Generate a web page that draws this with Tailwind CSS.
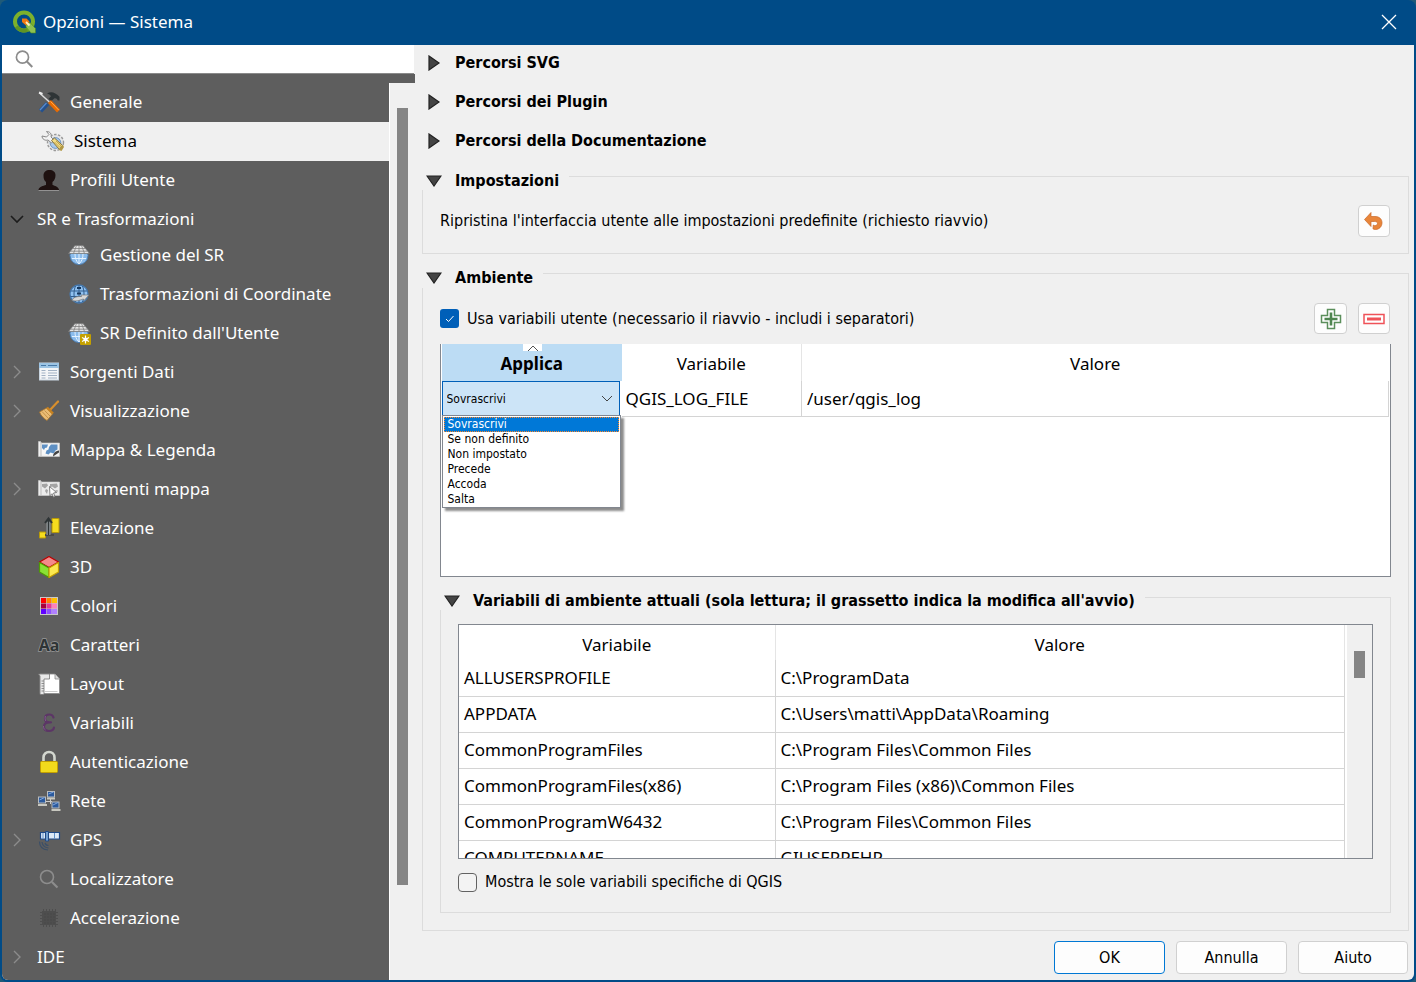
<!doctype html>
<html lang="it">
  <head>
    <meta charset="UTF-8" />
    <meta name="viewport" content="width=device-width, initial-scale=1.0" />
    <title>Opzioni — Sistema</title>
    <script src="https://cdn.jsdelivr.net/npm/@tailwindcss/browser@4"></script>
  </head>
  <body class="bg-[#1f5a78]">
    <div
      class="flex h-screen min-h-[960px] flex-col overflow-hidden rounded-lg bg-[#004b87] px-[2px] pb-[2px] font-['DejaVu_Sans_Condensed','Noto_Sans',sans-serif] text-base text-black"
    >
      <!-- Title bar -->
      <header class="flex h-[45px] shrink-0 items-center pr-[17px] pb-px pl-[10px] text-white">
        <svg class="h-6 w-6" viewBox="0 0 24 24" fill="none">
          <circle cx="12" cy="11.500" r="9" stroke="#7cb02c" stroke-width="4" />
          <path d="M4.500 16.500a9 9 0 0 0 11 3.500" stroke="#5f9424" stroke-width="3.600" />
          <path d="M14 13l4-.500 5.500 6v4.500h-4.500l-5-6z" fill="#8cc152" stroke="#4c8a1e" stroke-width=".6" />
          <path d="M10 8.500h4.500l3 3-3.500 4-4-3.500z" fill="#ee7913" />
          <path d="M14 12l3.500 3.500" stroke="#fcecc0" stroke-width="1.800" />
        </svg>
        <h1 class="ml-[7px] flex-1 font-['Noto_Sans',sans-serif] text-[17px]">Opzioni — Sistema</h1>
        <button type="button" aria-label="Chiudi">
          <svg class="h-4 w-4" viewBox="0 0 16 16" stroke="#fff" stroke-width="1.300"><path d="M1 1l14 14M15 1L1 15" /></svg>
        </button>
      </header>

      <div class="flex min-h-0 flex-1 overflow-hidden rounded-b-md bg-[#f0f0f0]">
        <!-- Sidebar -->
        <aside class="flex w-[413px] shrink-0 flex-col">
          <label class="mr-px flex h-[29px] shrink-0 items-center border-b border-[#8a8a8a] bg-white pl-[13px]">
            <svg class="h-5 w-5" viewBox="0 0 20 20" fill="none" stroke="#8c8c8c" stroke-width="1.800">
              <circle cx="8" cy="8" r="6.500" />
              <path d="M12.500 12.500l6 6" stroke-width="2.200" />
            </svg>
            <input type="search" aria-label="Cerca" class="ml-2 w-full outline-none" />
          </label>
          <div class="h-[9px] shrink-0 bg-[#5e5e5e]"></div>
          <div class="flex min-h-0 flex-1">
            <nav class="flex-1 bg-[#5e5e5e] font-['Noto_Sans',sans-serif] text-[17px] text-white">
              <ul>
                <li>
                  <a href="#" class="flex h-[39px] items-center pb-0.5 pl-[35px]">
                    <svg class="mr-[9px] h-6 w-6" viewBox="0 0 24 24" fill="none">
                      <path d="M10 3.500c4-2.500 8-1.500 12.500 3.200v3.800h-1.700c-.7-1.700-1.800-2.500-3.300-2.200l-3.500 3-2.500-2.500 2.500-2.500c-1-1.500-2-2.300-4-2.800z" fill="#2e3436" />
                      <path d="M2.500 3l11 10" stroke="#dcdcdc" stroke-width="1.500" />
                      <path d="M2 2.500l3.500 1.500" stroke="#eee" stroke-width="2" />
                      <path d="M10.500 13.500l-7 7.500" stroke="#23518f" stroke-width="4.400" />
                      <path d="M9.500 13l-6.500 7" stroke="#5b8bc9" stroke-width="1.300" />
                      <path d="M12.500 11.500l9 9.500" stroke="#e86a00" stroke-width="4" />
                      <path d="M13.500 11.500l8.300 8.700" stroke="#ffac50" stroke-width="1" />
                    </svg>
                    Generale
                  </a>
                </li>
                <li>
                  <a href="#" aria-current="page" class="flex h-[39px] items-center bg-[#f0f0f0] pb-0.5 pl-[39px] text-black">
                    <svg class="mr-[9px] h-6 w-6" viewBox="0 0 24 24" fill="none">
                      <circle cx="14.500" cy="13.500" r="8" fill="#e6e6e6" stroke="#999" stroke-width="1.400" stroke-dasharray="2.500 1.500" />
                      <circle cx="14.500" cy="14" r="5.400" fill="#a9c9ec" stroke="#5d88b8" stroke-width=".8" />
                      <path d="M1 7c0 3 3 5 6 4l3.500 3 2.500-3-3-3c1-3-1-5.500-4.500-5.500L8 5.500 5.500 8z" fill="#f3f3f3" stroke="#888" stroke-width="1" />
                      <path d="M10.500 11.500l3-2.500 8 7.500-3 4z" fill="#f2dc85" stroke="#84713a" stroke-width="1" />
                      <path d="M13.500 13l5 5M15 12l5 5" stroke="#b99b3d" stroke-width=".8" />
                      <path d="M19 18l3-2 1 2-2.500 4-2.500-1z" fill="#b19845" />
                    </svg>
                    Sistema
                  </a>
                </li>
                <li>
                  <a href="#" class="flex h-[39px] items-center pb-0.5 pl-[35px]">
                    <svg class="mr-[9px] h-6 w-6" viewBox="0 0 24 24">
                      <path d="M1.500 22.500h20.500v-1c-1-3-4-3.500-6.500-4.500v-3c2-1.500 3-4 3-7C18.500 4 16 2 12.500 2S6.500 4 6.500 7.500c0 3 .5 5 2.500 6.500v3c-3 1-6.500 1.500-7.500 4.500z" fill="#1e1110" />
                      <path d="M1.500 22.500h20.500" stroke="#aaa" stroke-width=".8" />
                    </svg>
                    Profili Utente
                  </a>
                </li>
                <li>
                  <a href="#" class="flex h-9 items-center pt-px pl-2">
                    <svg class="mr-[13px] h-[14px] w-[14px]" viewBox="0 0 14 14" fill="none" stroke="#1c1c1c" stroke-width="1.600"><path d="M1 4l6 6 6-6" /></svg>
                    SR e Trasformazioni
                  </a>
                  <ul>
                    <li>
                      <a href="#" class="flex h-[39px] items-center pb-0.5 pl-[65px]">
                        <svg class="mr-[9px] h-6 w-6" viewBox="0 0 24 24" fill="none">
                          <circle cx="12" cy="12.500" r="9" fill="#8bbcec" stroke="#4f81b5" stroke-width="1" />
                          <path d="M12 11v10M5 15.500h14M8 11c0 4 1 7 4 10M16 11c0 4-1 7-4 10" stroke="#e4f2ff" stroke-width="1" />
                          <path d="M8 2.500h8l6.500 8H1.500z" fill="#e3e3e3" stroke="#777" stroke-width=".8" />
                          <path d="M5.500 5.500h13M3.500 8.200h17M12 2.500v8M9.500 2.500l-3 8M14.500 2.500l3 8" stroke="#808080" stroke-width=".8" />
                        </svg>
                        Gestione del SR
                      </a>
                    </li>
                    <li>
                      <a href="#" class="flex h-[39px] items-center pb-0.5 pl-[65px]">
                        <svg class="mr-[9px] h-6 w-6" viewBox="0 0 24 24" fill="none">
                          <circle cx="12" cy="12" r="9" fill="#8fc0ef" stroke="#4779ae" stroke-width="1.300" />
                          <path d="M12 3v18M3.500 9h17M3.500 14.500h17M8.500 4c-2 5-2 11 0 16M15.500 4c2 5 2 11 0 16" stroke="#315d8d" stroke-width="1" />
                          <path d="M10 6h4M10 11.500h4" stroke="#16385f" stroke-width="2" />
                          <path d="M5 18.500c1-3 4-4 8-4h1.500l-.5-1.500 8 0-5 5.500-.5-1.500c-3 .5-6 3-11.500 1.500z" fill="#d6d6d6" stroke="#777" stroke-width=".7" />
                        </svg>
                        Trasformazioni di Coordinate
                      </a>
                    </li>
                    <li>
                      <a href="#" class="flex h-[39px] items-center pb-0.5 pl-[65px]">
                        <svg class="mr-[9px] h-6 w-6" viewBox="0 0 24 24" fill="none">
                          <circle cx="12" cy="12.500" r="9" fill="#8bbcec" stroke="#4f81b5" stroke-width="1" />
                          <path d="M12 11v10M5 15.500h14M8 11c0 4 1 7 4 10M16 11c0 4-1 7-4 10" stroke="#e4f2ff" stroke-width="1" />
                          <path d="M8 2.500h8l6.500 8H1.500z" fill="#e3e3e3" stroke="#777" stroke-width=".8" />
                          <path d="M5.500 5.500h13M3.500 8.200h17M12 2.500v8M9.500 2.500l-3 8M14.500 2.500l3 8" stroke="#808080" stroke-width=".8" />
                          <rect x="13" y="13" width="11" height="11" rx="1" fill="#c4a000" />
                          <path d="M18.500 14.500v8M15 16.500l7 4M22 16.500l-7 4" stroke="#fff" stroke-width="1.200" />
                          <circle cx="18.500" cy="18.500" r="2" fill="#fff" />
                        </svg>
                        SR Definito dall'Utente
                      </a>
                    </li>
                  </ul>
                </li>
                <li>
                  <a href="#" class="flex h-[39px] items-center pb-0.5 pl-2">
                    <svg class="mr-[13px] h-[14px] w-[14px]" viewBox="0 0 14 14" fill="none" stroke="#8c8c8c" stroke-width="1.400"><path d="M4 1l6 6-6 6" /></svg>
                    <svg class="mr-[9px] h-6 w-6" viewBox="0 0 24 24">
                      <rect x="2.500" y="3" width="19" height="17" fill="#f3f5f7" stroke="#c8d4df" />
                      <path d="M2 3h20v5H2z" fill="#9cc4e4" />
                      <path d="M4 5.500h5M11 5.500h9" stroke="#4679a8" stroke-width="1.200" />
                      <path d="M4.500 10.500h4M4.500 13h4M4.500 15.500h4M4.500 18h4M11 10.500h9M11 13h9M11 15.500h9M11 18h9" stroke="#a2b2c4" stroke-width="1.100" />
                    </svg>
                    Sorgenti Dati
                  </a>
                </li>
                <li>
                  <a href="#" class="flex h-[39px] items-center pb-0.5 pl-2">
                    <svg class="mr-[13px] h-[14px] w-[14px]" viewBox="0 0 14 14" fill="none" stroke="#8c8c8c" stroke-width="1.400"><path d="M4 1l6 6-6 6" /></svg>
                    <svg class="mr-[9px] h-6 w-6" viewBox="0 0 24 24">
                      <path d="M13 11l8-8.500" stroke="#d98f2c" stroke-width="2.200" stroke-linecap="round" />
                      <path d="M2.500 13L9.500 9l6 6-5.500 6.500c-3-2-6-4.500-7.500-8.500z" fill="#e9bb74" stroke="#a8742c" stroke-width=".8" />
                      <path d="M10 8.500l6 6" stroke="#c7811f" stroke-width="2.400" />
                      <path d="M5 12.500l6 6.500M7.500 11.500l5.500 5.500" stroke="#b98840" stroke-width=".8" />
                    </svg>
                    Visualizzazione
                  </a>
                </li>
                <li>
                  <a href="#" class="flex h-[39px] items-center pb-0.5 pl-[35px]">
                    <svg class="mr-[9px] h-6 w-6" viewBox="0 0 24 24">
                      <path d="M1.500 3.500h2l1 1.500h18v13.500H1.500z" fill="#f1f1f1" stroke="#cfcfcf" stroke-width=".6" />
                      <path d="M4.500 6.500h16.500v10H4.500z" fill="#f8f8f8" />
                      <path d="M5 6.500h6l-1 3-2 .500-1 2-2-2zM12 9l2-2.500h6.500v5l-2 1-2 3-3-1-2 2-3-1 1-3 2-1z" fill="#5e90c4" />
                      <path d="M16 18.500c0-3 2-5.500 6-6v2z" fill="#444" />
                      <path d="M4 4v14" stroke="#aaa" stroke-width=".7" />
                    </svg>
                    Mappa &amp; Legenda
                  </a>
                </li>
                <li>
                  <a href="#" class="flex h-[39px] items-center pb-0.5 pl-2">
                    <svg class="mr-[13px] h-[14px] w-[14px]" viewBox="0 0 14 14" fill="none" stroke="#8c8c8c" stroke-width="1.400"><path d="M4 1l6 6-6 6" /></svg>
                    <svg class="mr-[9px] h-6 w-6" viewBox="0 0 24 24">
                      <path d="M1.500 3.500h2l1 1.500h18v13.500H1.500z" fill="#ececec" stroke="#cfcfcf" stroke-width=".6" />
                      <path d="M5 7l5-.500 1 2-3 3-3-2zM9 12l2 1-1 4-2-3zM13 7l7-.500 1 3-3 2-3-2-2 1zM18 13l3 .500-1 2z" fill="#a4a4a4" />
                      <path d="M12.500 9.500l7 6-3 .500 1.500 3.500-1.500.700-1.500-3.500-2 2z" fill="#fff" stroke="#666" stroke-width=".8" />
                      <path d="M4 4v14" stroke="#aaa" stroke-width=".7" />
                    </svg>
                    Strumenti mappa
                  </a>
                </li>
                <li>
                  <a href="#" class="flex h-[39px] items-center pb-0.5 pl-[35px]">
                    <svg class="mr-[9px] h-6 w-6" viewBox="0 0 24 24" fill="none">
                      <path d="M15 2.500h7v14h-7zM2.500 16h6v6h-6z" fill="#f5dc1e" stroke="#b89a08" stroke-width="1" />
                      <path d="M8 19h9" stroke="#484848" stroke-width="2" />
                      <path d="M11.500 19V5" stroke="#c8d0d4" stroke-width="3.500" />
                      <path d="M11.500 19V3M8 7l3.500-4.500L15 7" stroke="#2e3436" stroke-width="2" />
                    </svg>
                    Elevazione
                  </a>
                </li>
                <li>
                  <a href="#" class="flex h-[39px] items-center pb-0.5 pl-[35px]">
                    <svg class="mr-[9px] h-6 w-6" viewBox="0 0 24 24" stroke-width="1.200" stroke-linejoin="round">
                      <path d="M12 1.500l9.500 5.500-9.500 5.500L2.500 7z" fill="#f58a8a" stroke="#b00" />
                      <path d="M2.500 7.500L12 13v9.500L2.500 17z" fill="#8ae234" stroke="#4e9a06" />
                      <path d="M21.500 7.500L12 13v9.500l9.500-5.500z" fill="#fce94f" stroke="#c4a000" />
                    </svg>
                    3D
                  </a>
                </li>
                <li>
                  <a href="#" class="flex h-[39px] items-center pb-0.5 pl-[35px]">
                    <svg class="mr-[9px] h-6 w-6" viewBox="0 0 24 24">
                      <path d="M3 3h18v18H3z" fill="#c8c8c8" />
                      <path d="M4 4h5v5H4z" fill="#f00" /><path d="M9.500 4h5v5h-5z" fill="#ff8400" /><path d="M15 4h5v5h-5z" fill="#ffc000" />
                      <path d="M4 9.500h5v5H4z" fill="#a8003c" /><path d="M9.500 9.500h5v5h-5z" fill="#e83593" /><path d="M15 9.500h5v5h-5z" fill="#ff80b8" />
                      <path d="M4 15h5v5H4z" fill="#6000ff" /><path d="M9.500 15h5v5h-5z" fill="#9050ff" /><path d="M15 15h5v5h-5z" fill="#b080ff" />
                    </svg>
                    Colori
                  </a>
                </li>
                <li>
                  <a href="#" class="flex h-[39px] items-center pb-0.5 pl-[35px]">
                    <svg class="mr-[9px] h-6 w-6" viewBox="0 0 24 24">
                      <text x="12" y="18" text-anchor="middle" font-family="Noto Sans, sans-serif" font-size="16" font-weight="700" fill="#2e3436" stroke="#999" stroke-width="1.400" paint-order="stroke">Aa</text>
                    </svg>
                    Caratteri
                  </a>
                </li>
                <li>
                  <a href="#" class="flex h-[39px] items-center pb-0.5 pl-[35px]">
                    <svg class="mr-[9px] h-6 w-6" viewBox="0 0 24 24">
                      <path d="M3 2h15l4.500 5v14.500H3z" fill="#fff" stroke="#888" stroke-width=".8" />
                      <path d="M18 2v5h4.500" fill="#ddd" stroke="#888" stroke-width=".8" />
                      <path d="M8 19.500h12.500" stroke="#ccc" />
                      <path d="M1.500 2h11v5h-5.500v15.500H3V4z" fill="#e8e8e8" stroke="#777" stroke-width=".8" />
                      <path d="M4.500 9H7M4.500 11.500H7M4.500 14H7M4.500 16.500H7M4.500 19H7" stroke="#777" stroke-width=".8" />
                    </svg>
                    Layout
                  </a>
                </li>
                <li>
                  <a href="#" class="flex h-[39px] items-center pb-0.5 pl-[35px]">
                    <svg class="mr-[9px] h-6 w-6" viewBox="0 0 24 24" fill="none">
                      <path d="M16.500 6.500c-.5-2-2-3-4-3-3 0-4.500 1.700-4.500 4s1.500 3.800 4.500 3.800h1.500M12.500 11.300c-3.500 0-5.500 1.700-5.500 4.300 0 2.700 2 4.400 5 4.400 2.800 0 4.500-1.300 5-3.500" stroke="#5c3566" stroke-width="2.200" stroke-linecap="round" />
                      <path d="M8.500 5c-.6 1-.6 4 .4 5M6.500 15c0 2 .5 3 2 4" stroke="#8a6796" stroke-width=".8" />
                    </svg>
                    Variabili
                  </a>
                </li>
                <li>
                  <a href="#" class="flex h-[39px] items-center pb-0.5 pl-[35px]">
                    <svg class="mr-[9px] h-6 w-6" viewBox="0 0 24 24" fill="none">
                      <path d="M6.500 12V7.500C6.500 4 9 2 12 2s5.500 2 5.500 5.500V12" stroke="#d3d7cf" stroke-width="2.600" />
                      <rect x="3.500" y="11.500" width="17" height="11" rx="1" fill="#f2da1c" stroke="#c4a000" />
                    </svg>
                    Autenticazione
                  </a>
                </li>
                <li>
                  <a href="#" class="flex h-[39px] items-center pb-0.5 pl-[35px]">
                    <svg class="mr-[9px] h-6 w-6" viewBox="0 0 24 24">
                      <path d="M8 12.500h7M13.500 9v6" stroke="#ccc" stroke-width="1" />
                      <g fill="#2b5a9e" stroke="#b8bcc0" stroke-width="1">
                        <rect x="10.500" y="2.500" width="7" height="5.500" /><rect x="1.500" y="8" width="7" height="6" /><rect x="15" y="13" width="7" height="6" />
                      </g>
                      <path d="M10 9.500h8M1 16h9M14.500 21h9" stroke="#c8c8c0" stroke-width="1.800" />
                      <path d="M11.500 5l5-2M2.500 11l5-2.500M16 16l5-2.500" stroke="#7fa6dc" stroke-width="1" />
                    </svg>
                    Rete
                  </a>
                </li>
                <li>
                  <a href="#" class="flex h-[39px] items-center pb-0.5 pl-2">
                    <svg class="mr-[13px] h-[14px] w-[14px]" viewBox="0 0 14 14" fill="none" stroke="#8c8c8c" stroke-width="1.400"><path d="M4 1l6 6-6 6" /></svg>
                    <svg class="mr-[9px] h-6 w-6" viewBox="0 0 24 24" fill="none">
                      <path d="M3.500 4.500h19v6.500h-19z" fill="#dce9f7" stroke="#204a87" stroke-width="1.200" />
                      <path d="M6 5v6M17.500 5v6" stroke="#5f8fc7" stroke-width="1" />
                      <path d="M8.500 3.500h3v9.500h-3z" fill="#729fcf" stroke="#204a87" />
                      <path d="M8 15c.5 1.500 1.500 2.500 3.500 2.500M5 14c.5 3.500 2.500 5.500 6.500 6M2.500 13.500c0 5 3 8 8.500 8.500" stroke="#3b4f68" stroke-width="1.200" />
                    </svg>
                    GPS
                  </a>
                </li>
                <li>
                  <a href="#" class="flex h-[39px] items-center pb-0.5 pl-[35px]">
                    <svg class="mr-[9px] h-6 w-6" viewBox="0 0 24 24" fill="none" stroke="#8d8d8d">
                      <circle cx="10" cy="10" r="6.500" stroke-width="1.600" />
                      <path d="M15 15l5.500 5.500" stroke-width="2.200" />
                    </svg>
                    Localizzatore
                  </a>
                </li>
                <li>
                  <a href="#" class="flex h-[39px] items-center pb-0.5 pl-[35px]">
                    <svg class="mr-[9px] h-6 w-6" viewBox="0 0 24 24" stroke="#4e4e4e" stroke-width="1">
                      <rect x="5.500" y="5.500" width="13" height="13" fill="#4b4b4b" />
                      <path d="M6.500 3v18M9.500 3v18M12.500 3v18M15.500 3v18M18.500 3v18M3 6.500h18M3 9.500h18M3 12.500h18M3 15.500h18M3 18.500h18" />
                    </svg>
                    Accelerazione
                  </a>
                </li>
                <li>
                  <a href="#" class="flex h-9 items-center pt-px pl-2">
                    <svg class="mr-[13px] h-[14px] w-[14px]" viewBox="0 0 14 14" fill="none" stroke="#8c8c8c" stroke-width="1.400"><path d="M4 1l6 6-6 6" /></svg>
                    IDE
                  </a>
                </li>
              </ul>
            </nav>
            <div class="w-[26px] border-l border-white pt-[25px] pb-[95px] pl-[7px]">
              <div class="h-full w-[11px] bg-[#858585]"></div>
            </div>
          </div>
        </aside>

        <!-- Options page -->
        <main class="flex min-w-0 flex-1 flex-col pr-[5px] pb-[6px] pl-[7px]">
          <h2 class="flex h-[39px] shrink-0 items-center gap-[14px] pb-[3px] pl-[6px] font-bold">
            <svg class="h-4 w-[13px]" viewBox="0 0 13 16"><path d="M1 1l10 7-10 7z" fill="#444" stroke="#222" stroke-width="1.200" /></svg>
            Percorsi SVG
          </h2>
          <h2 class="flex h-[39px] shrink-0 items-center gap-[14px] pb-[3px] pl-[6px] font-bold">
            <svg class="h-4 w-[13px]" viewBox="0 0 13 16"><path d="M1 1l10 7-10 7z" fill="#444" stroke="#222" stroke-width="1.200" /></svg>
            Percorsi dei Plugin
          </h2>
          <h2 class="flex h-[39px] shrink-0 items-center gap-[14px] pb-[3px] pl-[6px] font-bold">
            <svg class="h-4 w-[13px]" viewBox="0 0 13 16"><path d="M1 1l10 7-10 7z" fill="#444" stroke="#222" stroke-width="1.200" /></svg>
            Percorsi della Documentazione
          </h2>

          <!-- Impostazioni -->
          <section class="mt-2 shrink-0">
            <div class="flex h-5 items-center pt-0.5 pl-1">
              <svg class="h-3 w-4" viewBox="0 0 16 12"><path d="M1 1h14l-7 10z" fill="#444" stroke="#222" stroke-width="1.200" /></svg>
              <h2 class="mr-[10px] ml-[13px] font-bold">Impostazioni</h2>
              <div class="h-[14px] flex-1 self-end border-t border-r border-[#dcdcdc]"></div>
            </div>
            <div class="flex items-center justify-between border-x border-b border-[#dcdcdc] pt-[15px] pr-[18px] pb-4 pl-[17px]">
              <p>Ripristina l'interfaccia utente alle impostazioni predefinite (richiesto riavvio)</p>
              <button type="button" aria-label="Ripristina" class="flex h-8 w-8 items-center justify-center rounded-sm border border-[#d0d0d0] bg-[#fdfdfd]">
                <svg class="h-5 w-5" viewBox="0 0 20 20"><path d="M.5 8.500L7 1.500v4h4c4.500 0 7 2.700 7 6.200 0 4-3 6.800-6.500 6.800-1.500 0-2.500-.3-2.500-1l.3-3.500c1.500 1.300 4.200.5 4.200-1.400 0-1.600-1.500-2.100-3-2.100H7v5z" fill="#e8853a" stroke="#c9682a" stroke-width=".7" /></svg>
              </button>
            </div>
          </section>

          <!-- Ambiente -->
          <section class="mt-[14px] flex min-h-0 flex-1 flex-col">
            <div class="flex h-5 shrink-0 items-center pl-1">
              <svg class="h-3 w-4" viewBox="0 0 16 12"><path d="M1 1h14l-7 10z" fill="#444" stroke="#222" stroke-width="1.200" /></svg>
              <h2 class="mr-[10px] ml-[13px] font-bold">Ambiente</h2>
              <div class="h-[15px] flex-1 self-end border-t border-r border-[#dcdcdc]"></div>
            </div>
            <div class="flex min-h-0 flex-1 flex-col border-x border-b border-[#dcdcdc] px-[17px] pt-[15px] pb-[17px]">
              <div class="flex shrink-0 items-center pr-px">
                <label class="flex flex-1 items-center gap-2">
                  <span class="relative h-[19px] w-[19px]">
                    <input type="checkbox" checked class="block h-[19px] w-[19px] appearance-none rounded-[3px] bg-[#005fb8]" />
                    <svg class="pointer-events-none absolute inset-0 h-[19px] w-[19px]" viewBox="0 0 19 19" fill="none" stroke="#fff"><path d="M6 10l2.500 2.500L13.500 7" /></svg>
                  </span>
                  Usa variabili utente (necessario il riavvio - includi i separatori)
                </label>
                <button type="button" aria-label="Aggiungi variabile" class="flex h-[31px] w-[33px] items-center justify-center rounded-sm border border-[#d0d0d0] bg-[#fdfdfd]">
                  <svg class="h-[22px] w-[22px]" viewBox="0 0 22 22"><path d="M7.500 1.500h7v6h6v7h-6v6h-7v-6h-6v-7h6z" fill="#fff" stroke="#5b8f5b" stroke-width="1.500" /><path d="M11 4.500v13M4.500 11h13" stroke="#4f8650" stroke-width="2.600" /></svg>
                </button>
                <button type="button" aria-label="Rimuovi variabile" class="ml-[11px] flex h-[31px] w-8 items-center justify-center rounded-sm border border-[#d0d0d0] bg-[#fdfdfd]">
                  <svg class="h-[22px] w-[22px]" viewBox="0 0 22 22"><path d="M1 6.500h20v9H1z" fill="#fff" stroke="#ef5258" stroke-width="1.500" /><path d="M4 11h14" stroke="#ef5258" stroke-width="3" /></svg>
                </button>
              </div>

              <!-- User variables -->
              <div class="mt-[10px] h-[233px] shrink-0 border border-t-0 border-[#82878f] bg-white pr-px font-['Noto_Sans',sans-serif] text-[17px]">
                <table class="w-full table-fixed">
                  <thead>
                    <tr class="h-[37px]">
                      <th class="relative w-[180px] border-l border-white bg-[#bcdcf4] pt-0.5 font-bold">
                        <svg class="absolute top-0 left-[81px] h-[7px] w-[19px] bg-white" viewBox="0 0 19 7" fill="none" stroke="#555"><path d="M5 7l5-5 5 5" /></svg>
                        Applica
                      </th>
                      <th class="w-[180px] border-r border-[#e5e5e5] pt-0.5 font-normal">Variabile</th>
                      <th class="pt-0.5 font-normal">Valore</th>
                    </tr>
                  </thead>
                  <tbody>
                    <tr class="h-[35px]">
                      <td class="relative pr-[2px]">
                        <select aria-label="Applica" class="block h-[35px] w-full appearance-none border border-[#005fb8] bg-[#cce4f7] px-1 font-['DejaVu_Sans_Condensed','Noto_Sans',sans-serif] text-xs">
                          <option>Sovrascrivi</option>
                          <option>Se non definito</option>
                          <option>Non impostato</option>
                          <option>Precede</option>
                          <option>Accoda</option>
                          <option>Salta</option>
                        </select>
                        <svg class="pointer-events-none absolute top-[14px] right-[9px] h-2 w-3" viewBox="0 0 12 8" fill="none" stroke="#444"><path d="M1 1l5 5 5-5" /></svg>
                        <ul
                          role="listbox"
                          aria-label="Applica"
                          class="absolute top-[34px] left-0 z-10 w-[179px] border border-[#82878f] bg-white pt-px font-['DejaVu_Sans_Condensed','Noto_Sans',sans-serif] text-xs leading-[15px] shadow-[3px_3px_2px_rgba(0,0,0,0.45)]"
                        >
                          <li role="option" aria-selected="true" class="mx-px border border-dotted border-[#ff8728] bg-[#0078d7] pl-[3px] leading-[13px] text-white">Sovrascrivi</li>
                          <li role="option" class="pl-[5px]">Se non definito</li>
                          <li role="option" class="pl-[5px]">Non impostato</li>
                          <li role="option" class="pl-[5px]">Precede</li>
                          <li role="option" class="pl-[5px]">Accoda</li>
                          <li role="option" class="pl-[5px]">Salta</li>
                        </ul>
                      </td>
                      <td class="border-r border-b border-[#d4d4d4] pl-1">QGIS_LOG_FILE</td>
                      <td class="border-r border-b border-[#d4d4d4] pl-[5px]">/user/qgis_log</td>
                    </tr>
                  </tbody>
                </table>
              </div>

              <!-- Current environment variables -->
              <section class="mt-[13px] flex min-h-0 flex-1 flex-col">
                <div class="flex h-5 shrink-0 items-center pt-px pl-1">
                  <svg class="h-3 w-4" viewBox="0 0 16 12"><path d="M1 1h14l-7 10z" fill="#444" stroke="#222" stroke-width="1.200" /></svg>
                  <h3 class="mr-[10px] ml-[13px] font-bold">Variabili di ambiente attuali (sola lettura; il grassetto indica la modifica all'avvio)</h3>
                  <div class="h-[13px] flex-1 self-end border-t border-r border-[#dcdcdc]"></div>
                </div>
                <div class="flex min-h-0 flex-1 flex-col border-x border-b border-[#dcdcdc] px-[17px] pt-[14px] pb-5">
                  <div class="flex min-h-0 flex-1 overflow-hidden border border-[#82878f] bg-white font-['Noto_Sans',sans-serif] text-[17px]">
                    <div class="h-0 flex-1">
                      <table class="w-full table-fixed">
                        <thead>
                          <tr class="h-[35px]">
                            <th class="w-[316px] border-r border-[#e5e5e5] pt-1 font-normal">Variabile</th>
                            <th class="border-r border-[#e5e5e5] pt-1 font-normal">Valore</th>
                          </tr>
                        </thead>
                        <tbody>
                          <tr class="h-9 border-b border-[#d4d4d4]">
                            <td class="border-r border-[#d4d4d4] pl-[5px]">ALLUSERSPROFILE</td>
                            <td class="border-r border-[#d4d4d4] pl-[5px]">C:\ProgramData</td>
                          </tr>
                          <tr class="h-9 border-b border-[#d4d4d4]">
                            <td class="border-r border-[#d4d4d4] pl-[5px]">APPDATA</td>
                            <td class="border-r border-[#d4d4d4] pl-[5px]">C:\Users\matti\AppData\Roaming</td>
                          </tr>
                          <tr class="h-9 border-b border-[#d4d4d4]">
                            <td class="border-r border-[#d4d4d4] pl-[5px]">CommonProgramFiles</td>
                            <td class="border-r border-[#d4d4d4] pl-[5px]">C:\Program Files\Common Files</td>
                          </tr>
                          <tr class="h-9 border-b border-[#d4d4d4]">
                            <td class="border-r border-[#d4d4d4] pl-[5px]">CommonProgramFiles(x86)</td>
                            <td class="border-r border-[#d4d4d4] pl-[5px]">C:\Program Files (x86)\Common Files</td>
                          </tr>
                          <tr class="h-9 border-b border-[#d4d4d4]">
                            <td class="border-r border-[#d4d4d4] pl-[5px]">CommonProgramW6432</td>
                            <td class="border-r border-[#d4d4d4] pl-[5px]">C:\Program Files\Common Files</td>
                          </tr>
                          <tr class="h-9 border-b border-[#d4d4d4]">
                            <td class="border-r border-[#d4d4d4] pl-[5px]">COMPUTERNAME</td>
                            <td class="border-r border-[#d4d4d4] pl-[5px]">GIUSEPPEHP</td>
                          </tr>
                        </tbody>
                      </table>
                    </div>
                    <div class="ml-[2px] w-[25px] bg-[#f0f0f0] pt-[26px] pl-[7px]">
                      <div class="h-[27px] w-[11px] bg-[#858585]"></div>
                    </div>
                  </div>
                  <label class="mt-[13px] flex shrink-0 items-center gap-2 leading-5">
                    <input type="checkbox" class="h-[19px] w-[19px] appearance-none rounded-[4px] border border-[#626262] bg-[#f3f3f3]" />
                    Mostra le sole variabili specifiche di QGIS
                  </label>
                </div>
              </section>
            </div>
          </section>

          <footer class="mt-[10px] flex shrink-0 justify-end gap-[11px] pr-px">
            <button type="button" class="h-[33px] w-[111px] rounded-sm border border-[#0078d4] bg-[#fdfdfd]">OK</button>
            <button type="button" class="h-[33px] w-[111px] rounded-sm border border-[#d0d0d0] bg-[#fdfdfd]">Annulla</button>
            <button type="button" class="h-[33px] w-[110px] rounded-sm border border-[#d0d0d0] bg-[#fdfdfd]">Aiuto</button>
          </footer>
        </main>
      </div>
    </div>
  </body>
</html>
